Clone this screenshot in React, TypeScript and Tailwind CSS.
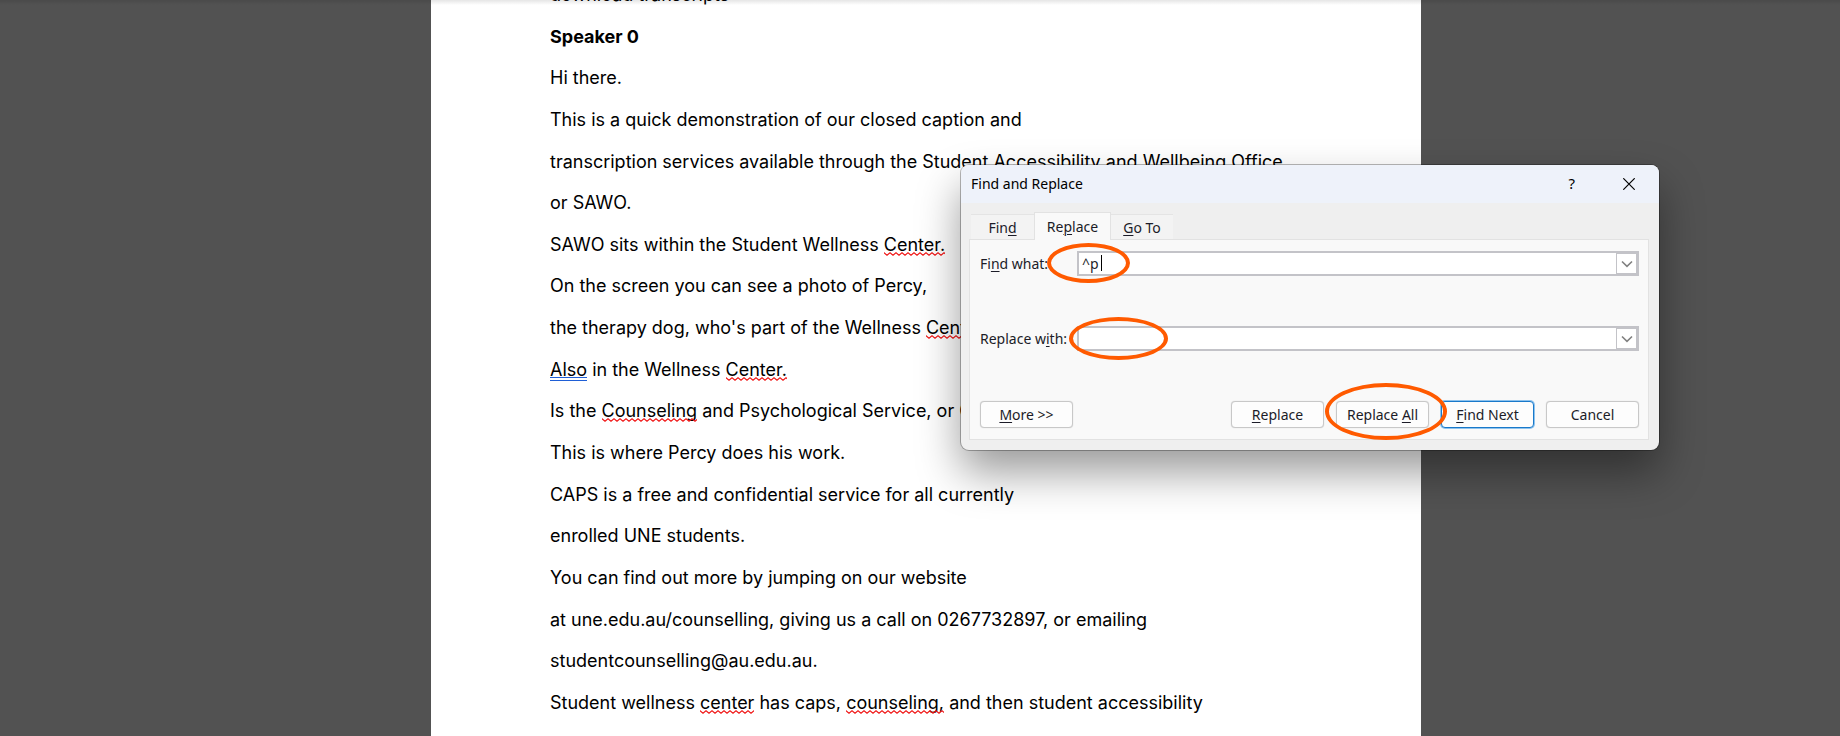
import { useState } from "react";
import type { ReactNode } from "react";

function Misspelt({ children }: { children: ReactNode }) {
  return (
    <span className="relative inline-block">
      {children}
      <svg className="absolute top-[19px] left-0 h-1 w-full" aria-hidden="true">
        <defs>
          <pattern id="squiggle" width="6" height="4" patternUnits="userSpaceOnUse">
            <path d="M-1 -0.2 L0 0.8 L3 3.2 L6 0.8 L7 -0.2" fill="none" stroke="#f01414" strokeWidth="1.1" />
          </pattern>
        </defs>
        <rect width="100%" height="4" fill="url(#squiggle)" />
      </svg>
    </span>
  );
}

function Grammar({ children }: { children: ReactNode }) {
  return (
    <span className="relative inline-block">
      {children}
      <span className="absolute top-[19px] left-0 h-1 w-full border-y border-[#1f5fd6]" />
    </span>
  );
}

const lines: ReactNode[] = [
  "download transcripts",
  <strong>Speaker 0</strong>,
  "Hi there.",
  "This is a quick demonstration of our closed caption and",
  "transcription services available through the Student Accessibility and Wellbeing Office",
  "or SAWO.",
  <>SAWO sits within the Student Wellness <Misspelt>Center.</Misspelt></>,
  "On the screen you can see a photo of Percy,",
  <>the therapy dog, who's part of the Wellness <Misspelt>Center.</Misspelt></>,
  <><Grammar>Also</Grammar> in the Wellness <Misspelt>Center.</Misspelt></>,
  <>Is the <Misspelt>Counseling</Misspelt> and Psychological Service, or CAPS.</>,
  "This is where Percy does his work.",
  "CAPS is a free and confidential service for all currently",
  "enrolled UNE students.",
  "You can find out more by jumping on our website",
  "at une.edu.au/counselling, giving us a call on 0267732897, or emailing",
  "studentcounselling@au.edu.au.",
  <>Student wellness <Misspelt>center</Misspelt> has caps, <Misspelt>counseling,</Misspelt> and then student accessibility</>,
];

function Key({ children }: { children: ReactNode }) {
  return <span className="underline decoration-1 underline-offset-2">{children}</span>;
}

function Ring({ className }: { className: string }) {
  return <span aria-hidden="true" className={`pointer-events-none absolute rounded-[50%] border-4 border-[#ff5a00] ${className}`} />;
}

function Field({ id, label, value, children }: { id: string; label: ReactNode; value: string; children: ReactNode }) {
  const [text, setText] = useState(value);
  return (
    <div className="flex items-center">
      <label htmlFor={id} className="w-[97px] shrink-0 whitespace-nowrap">{label}</label>
      <div className="relative flex h-[25px] grow border-2 border-[#c3c3c8] bg-white">
        <input
          id={id}
          value={text}
          onChange={(e) => setText(e.target.value)}
          className="w-full min-w-0 bg-transparent pl-[3px] outline-none"
        />
        <button type="button" aria-label="Show history" className="flex w-[21px] shrink-0 items-center justify-center border border-[#c3c3c8] bg-white">
          <svg width="12" height="8" viewBox="0 0 12 8" fill="none" stroke="#808080" strokeWidth="1.6">
            <path d="M1 1.5 L6 6.3 L11 1.5" />
          </svg>
        </button>
        {children}
      </div>
    </div>
  );
}

function PushButton({ children, accent = false }: { children: ReactNode; accent?: boolean }) {
  return (
    <button
      type="button"
      className={`h-[27px] w-[93px] rounded-[4px] border bg-[#fdfdfd] leading-5 whitespace-nowrap ${accent ? "border-[#1979ca] shadow-[0_0_0_1px_#8ec3ee]" : "border-[#c8c8c8] shadow-[0_0_1px_#c8c8c8]"}`}
    >
      {children}
    </button>
  );
}

function FindReplaceDialog() {
  return (
    <section
      role="dialog"
      aria-label="Find and Replace"
      className="absolute top-[165px] left-[961px] w-[698px] rounded-[8px] bg-[#efefef] font-['Noto_Sans',sans-serif] text-[14px] text-[#1c1c28] shadow-[0_0_0_1px_rgba(0,0,0,0.28),0_22px_44px_rgba(0,0,0,0.4)]"
    >
      <header className="flex h-[38px] items-center rounded-t-[8px] bg-[#eef2fa] pr-6 pb-px pl-[10px] text-black">
        <h1 className="grow">Find and Replace</h1>
        <button type="button" aria-label="Help" className="mr-12 text-[15px]">?</button>
        <button type="button" aria-label="Close">
          <svg width="12" height="12" viewBox="0 0 12 12" stroke="#000" strokeWidth="1.2">
            <path d="M0.3 0.3 L11.7 11.7 M11.7 0.3 L0.3 11.7" />
          </svg>
        </button>
      </header>
      <div className="pt-[9px] pr-[10px] pb-[10px] pl-2">
        <div role="tablist" className="flex h-[27px] items-end pl-[2px]">
          <button role="tab" type="button" className="h-[25px] w-[63px] border-t border-[#e4e4e4] bg-[#f3f3f3]">Fin<Key>d</Key></button>
          <button role="tab" type="button" aria-selected="true" className="relative -mb-px h-[28px] w-[77px] border border-b-0 border-[#e2e2e2] bg-[#f9f9f9]">Re<Key>p</Key>lace</button>
          <button role="tab" type="button" className="h-[25px] w-[62px] border-t border-[#e4e4e4] bg-[#f3f3f3]"><Key>G</Key>o To</button>
        </div>
        <div role="tabpanel" className="border border-[#e2e2e2] bg-[#f9f9f9] pt-[11px] pr-[9px] pb-[11px] pl-[10px]">
          <form className="flex flex-col" onSubmit={(e) => e.preventDefault()}>
            <Field id="find-what" label={<>Fi<Key>n</Key>d what:</>} value="^p">
              <span className="absolute top-[2px] left-[22px] h-4 w-px bg-black" />
              <Ring className="top-[-10px] left-[-32px] h-[40px] w-[83px]" />
            </Field>
            <div className="mt-[50px]">
              <Field id="replace-with" label={<>Replace w<Key>i</Key>th:</>} value="">
                <Ring className="top-[-11px] left-[-10px] h-[43px] w-[99px]" />
              </Field>
            </div>
            <div className="mt-[50px] flex items-center gap-3">
              <PushButton><Key>M</Key>ore &gt;&gt;</PushButton>
              <div className="grow" />
              <PushButton><Key>R</Key>eplace</PushButton>
              <div className="relative z-10 flex">
                <PushButton>Replace <Key>A</Key>ll</PushButton>
                <Ring className="top-[-18px] left-[-11px] h-[57px] w-[122px]" />
              </div>
              <PushButton accent><Key>F</Key>ind Next</PushButton>
              <PushButton>Cancel</PushButton>
            </div>
          </form>
        </div>
      </div>
    </section>
  );
}

export default function App() {
  return (
    <div className="relative h-screen overflow-hidden bg-[#525252] pl-3">
      <article className="mx-auto flex h-full max-w-[990px] flex-col bg-white pb-[21px] pl-[119px]">
        <div className="-mt-[17px] flex grow flex-col justify-between font-['Inter',sans-serif] text-[18px] leading-6 whitespace-nowrap text-black">
          {lines.map((line, i) => (
            <p key={i}>{line}</p>
          ))}
        </div>
      </article>
      <div className="absolute inset-x-0 top-0 h-[5px] bg-gradient-to-b from-black/10 to-transparent" />
      <FindReplaceDialog />
    </div>
  );
}
